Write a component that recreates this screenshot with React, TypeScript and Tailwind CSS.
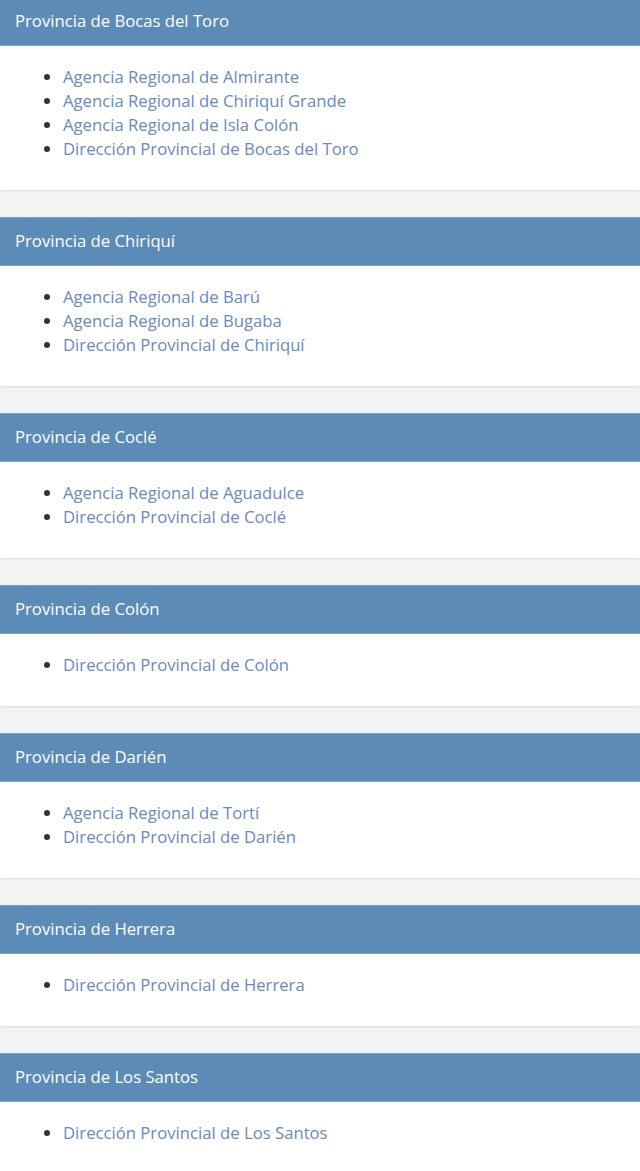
const provinces = [
  {
    name: 'Provincia de Bocas del Toro',
    offices: [
      'Agencia Regional de Almirante',
      'Agencia Regional de Chiriquí Grande',
      'Agencia Regional de Isla Colón',
      'Dirección Provincial de Bocas del Toro',
    ],
  },
  {
    name: 'Provincia de Chiriquí',
    offices: ['Agencia Regional de Barú', 'Agencia Regional de Bugaba', 'Dirección Provincial de Chiriquí'],
  },
  {
    name: 'Provincia de Coclé',
    offices: ['Agencia Regional de Aguadulce', 'Dirección Provincial de Coclé'],
  },
  {
    name: 'Provincia de Colón',
    offices: ['Dirección Provincial de Colón'],
  },
  {
    name: 'Provincia de Darién',
    offices: ['Agencia Regional de Tortí', 'Dirección Provincial de Darién'],
  },
  {
    name: 'Provincia de Herrera',
    offices: ['Dirección Provincial de Herrera'],
  },
  {
    name: 'Provincia de Los Santos',
    offices: ['Dirección Provincial de Los Santos'],
  },
];

const App = () => {
  return (
    <div className="min-h-screen bg-[#f3f3f3] font-['Open_Sans',sans-serif] overflow-hidden">
      <div className="-mt-[3px]">
        {provinces.map(p => (
          <section key={p.name} className="mb-[27px] bg-white shadow-[0_1px_2px_rgba(0,0,0,0.1)]">
            <div className="h-[49px] flex items-center px-[15px] pb-[2px] bg-[#5b8bb6] border-t border-[#7fa3c6] border-b border-b-[#7ea2c5] text-white text-[16.7px]">
              {p.name}
            </div>
            <div className="pt-[19px] pb-[29px] px-[15px]">
              <ul className="list-disc pl-[48px] text-[16.7px] leading-[24px] text-[#333]">
                {p.offices.map(o => (
                  <li key={o}>
                    <a href="#" className="text-[#6a89bd]">
                      {o}
                    </a>
                  </li>
                ))}
              </ul>
            </div>
          </section>
        ))}
      </div>
    </div>
  );
};

export default App;
